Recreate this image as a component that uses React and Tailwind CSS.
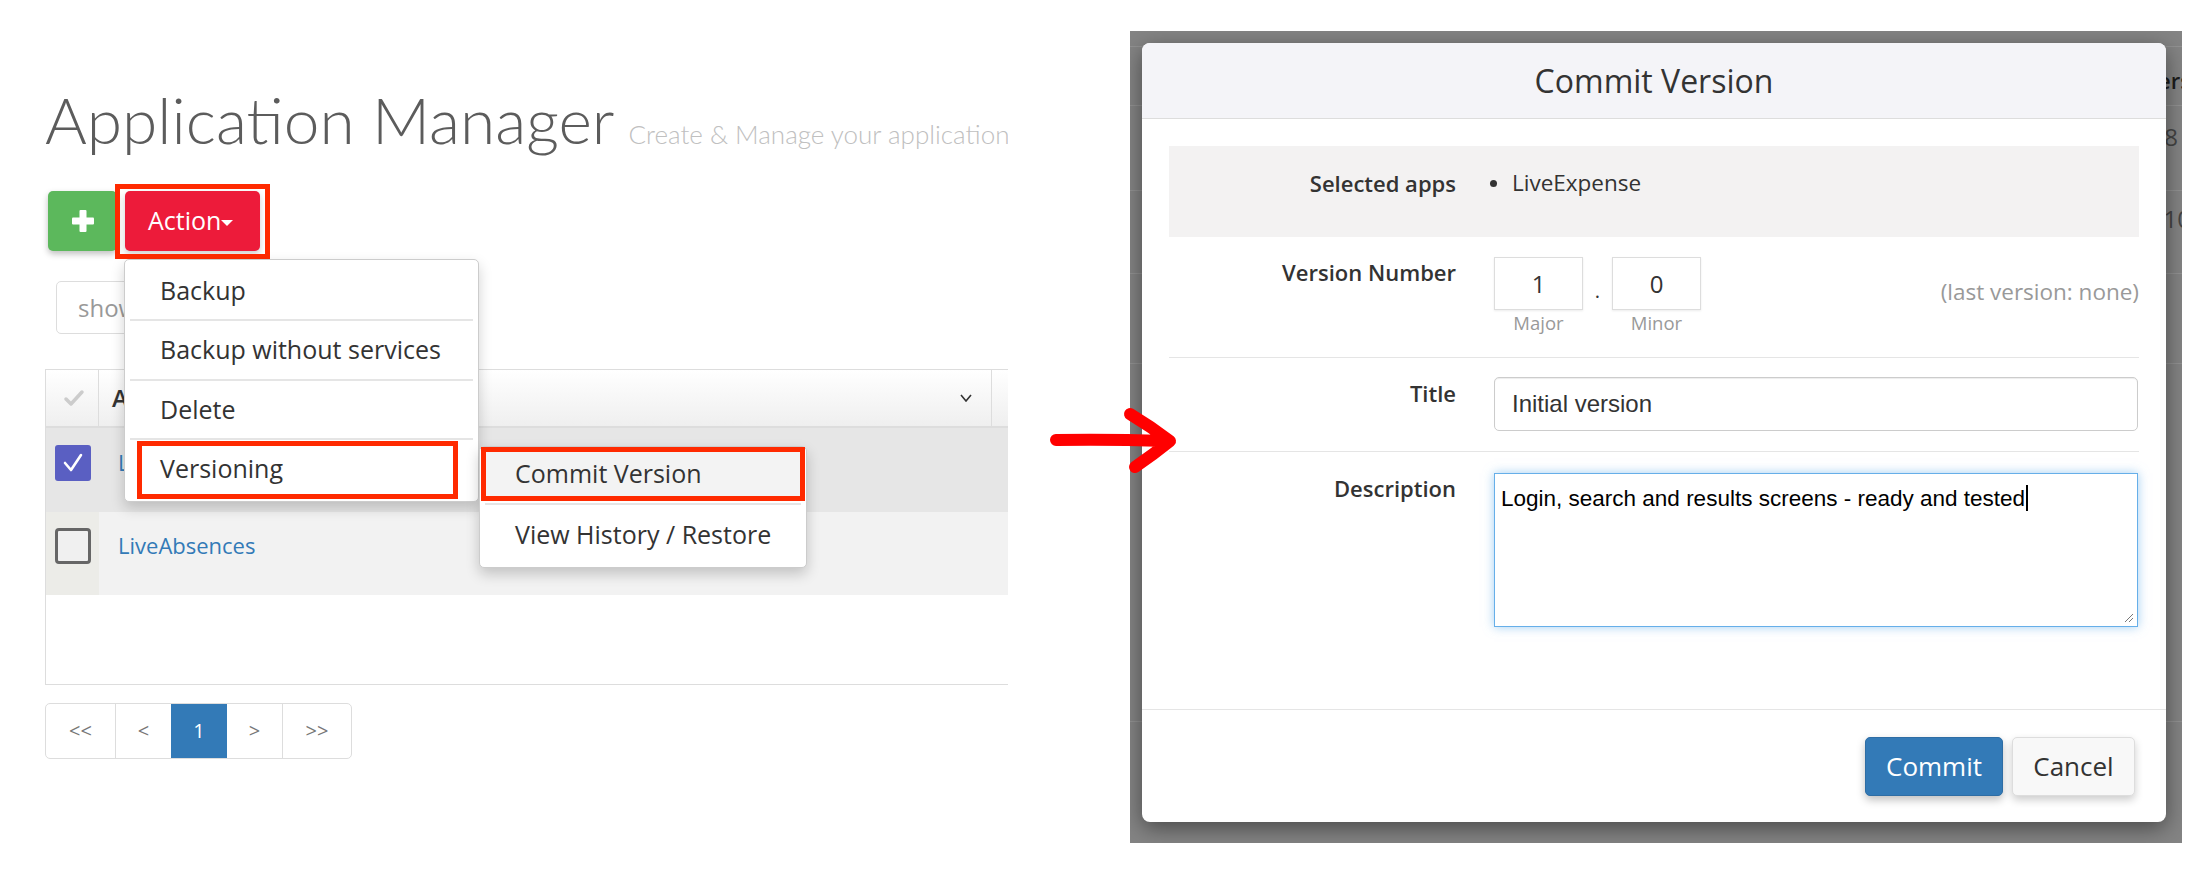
import React from 'react'

function RedBox({ className }) {
  return <span className={`pointer-events-none absolute border-[5px] border-[#ff2a00] ${className}`} />
}

function LeftPanel() {
  return (
    <div className="w-[1008px] shrink-0 overflow-hidden pl-[45px]">
      <div className="mt-[88px] flex items-baseline whitespace-nowrap font-['Lato',sans-serif] font-light">
        <h1 className="text-[64px] leading-none text-[#5c5c5c]">Application Manager</h1>
        <span className="ml-[14px] text-[26px] text-[#c0c0c0]">Create &amp; Manage your applications</span>
      </div>

      <div className="relative z-10 mt-[37px] flex h-[60px]">
        <button className="ml-[3px] flex w-[69px] items-center justify-center rounded-[5px] bg-[#5cb85c] shadow-[0_3px_6px_rgba(0,0,0,0.25)]">
          <svg width="24" height="24" viewBox="0 0 24 24">
            <rect x="8.5" y="1" width="7" height="22" rx="1" fill="#fff" />
            <rect x="1" y="8.5" width="22" height="7" rx="1" fill="#fff" />
          </svg>
        </button>
        <div className="relative ml-[8px]">
          <button className="flex h-full w-[135px] items-center rounded-[5px] bg-[#ed1b3a] pl-[23px] text-[25px] text-white shadow-[0_3px_6px_rgba(0,0,0,0.2)]">
            Action
            <span className="mt-[3px] inline-block h-0 w-0 border-x-[6px] border-t-[6px] border-x-transparent border-t-white" />
          </button>
          <RedBox className="-left-[10px] -top-[7px] -right-[10px] -bottom-[8px]" />
        </div>

        <div className="absolute left-[79px] top-[68px] w-[355px] rounded-[5px] border border-[#ccc] bg-white pb-[4px] pt-[2px] text-[25px] text-[#333] shadow-[0_6px_14px_rgba(0,0,0,0.18)]">
          <div className="flex h-[57px] items-center pl-[35px]">Backup</div>
          <div className="mx-[5px] h-[2px] bg-[#e5e5e5]" />
          <div className="flex h-[58px] items-center pl-[35px]">Backup without services</div>
          <div className="mx-[5px] h-[2px] bg-[#e5e5e5]" />
          <div className="flex h-[57px] items-center pl-[35px]">Delete</div>
          <div className="mx-[5px] h-[2px] bg-[#e5e5e5]" />
          <div className="relative flex h-[57px] items-center pl-[35px]">
            Versioning
            <RedBox className="left-[12px] right-[20px] top-[1px] -bottom-[2px]" />
          </div>
        </div>

        <div className="absolute left-[434px] top-[255px] w-[328px] rounded-[5px] border border-[#ccc] bg-white pb-[2px] text-[25px] text-[#333] shadow-[0_6px_14px_rgba(0,0,0,0.2)]">
          <div className="relative mx-[1px] flex h-[54px] items-center bg-[#f3f3f3] pl-[34px]">
            Commit Version
            <RedBox className="left-0 right-0 top-0 bottom-0" />
          </div>
          <div className="mx-[5px] mt-[2px] h-[2px] bg-[#e5e5e5]" />
          <div className="flex h-[60px] items-center pl-[35px]">View History / Restore</div>
        </div>
      </div>

      <div className="ml-[11px] mt-[30px] flex h-[53px] w-[300px] items-center rounded-[5px] border border-[#ddd] pl-[21px] text-[24px] text-[#999]">
        show
      </div>

      <div className="mt-[35px] w-[1100px] border-y border-l border-[#ddd]">
        <div className="flex h-[58px] border-b-2 border-[#ddd] bg-gradient-to-b from-white to-[#efefef]">
          <div className="flex w-[53px] items-center justify-center border-r border-[#ddd] pl-[4px]">
            <svg width="22" height="18" viewBox="0 0 22 18" fill="none" stroke="#ccc" strokeWidth="3.5" strokeLinecap="round" strokeLinejoin="round">
              <path d="M3 10l5 5L19 3" />
            </svg>
          </div>
          <div className="flex w-[893px] items-center justify-between border-r border-[#ddd] pl-[13px] pr-[19px] text-[24px] font-semibold text-[#333]">
            <span>App Name</span>
            <svg width="12" height="8" viewBox="0 0 12 8" fill="none" stroke="#333" strokeWidth="1.6">
              <path d="M1 1l5 6 5-6" />
            </svg>
          </div>
          <div className="flex-1" />
        </div>
        <div className="flex h-[84px] bg-[#e6e6e6]">
          <div className="flex w-[53px] justify-center pt-[17px]">
            <span className="flex h-[36px] w-[36px] items-center justify-center rounded-[3px] bg-[#5a5fc2]">
              <svg width="24" height="24" viewBox="0 0 24 24" fill="none" stroke="#fff" strokeWidth="2.6" strokeLinecap="round" strokeLinejoin="round">
                <path d="M4 12l6 7L20 4" />
              </svg>
            </span>
          </div>
          <div className="pl-[19px] pt-[19px] text-[22px] leading-[30px] text-[#337ab7]">LiveExpense</div>
        </div>
        <div className="flex h-[83px] bg-[#f2f2f2]">
          <div className="flex w-[53px] justify-center bg-[#ececE8] pt-[16px]">
            <span className="h-[36px] w-[36px] rounded-[4px] border-[3px] border-[#666] bg-[#f0f0f0]" />
          </div>
          <div className="pl-[19px] pt-[18px] text-[22px] leading-[30px] text-[#337ab7]">LiveAbsences</div>
        </div>
        <div className="h-[89px] bg-white" />
      </div>

      <div className="mt-[18px] flex h-[56px] w-[307px] overflow-hidden rounded-[5px] border border-[#ddd] text-[20px] text-[#777]">
        <div className="flex w-[70px] items-center justify-center border-r border-[#ddd]">&lt;&lt;</div>
        <div className="flex w-[55px] items-center justify-center">&lt;</div>
        <div className="flex w-[56px] items-center justify-center bg-[#337ab7] text-white">1</div>
        <div className="flex w-[56px] items-center justify-center border-r border-[#ddd]">&gt;</div>
        <div className="flex flex-1 items-center justify-center">&gt;&gt;</div>
      </div>
    </div>
  )
}

function FormLabel({ children, className = '' }) {
  return (
    <div className={`w-[287px] shrink-0 text-right text-[22px] font-semibold leading-[30px] text-[#333] ${className}`}>
      {children}
    </div>
  )
}

function VersionBox({ value, label }) {
  return (
    <div className="flex flex-col items-center">
      <div className="flex h-[53px] w-[89px] items-center justify-center border border-[#ddd] text-[24px] text-[#333] shadow-[0_1px_2px_rgba(0,0,0,0.08)]">
        {value}
      </div>
      <div className="mt-[1px] text-[18.5px] leading-[24px] text-[#999]">{label}</div>
    </div>
  )
}

function Modal() {
  return (
    <div className="absolute left-[12px] top-[12px] flex h-[779px] w-[1024px] flex-col overflow-hidden rounded-[8px] bg-white shadow-[0_6px_22px_rgba(0,0,0,0.45)]">
      <div className="flex h-[76px] shrink-0 items-center justify-center border-b border-[#ddd] bg-[#f4f4f8] text-[32px] text-[#333]">
        Commit Version
      </div>
      <div className="flex-1 px-[27px] pt-[27px]">
        <div className="flex h-[91px] bg-[#f3f2f2] pt-[22px]">
          <FormLabel>Selected apps</FormLabel>
          <div className="ml-[34px] flex h-[30px] items-center gap-[15px] text-[22.5px] text-[#333]">
            <span className="h-[7px] w-[7px] rounded-full bg-[#333]" />
            LiveExpense
          </div>
        </div>
        <div className="flex h-[121px] border-b border-[#e5e5e5] pt-[20px]">
          <FormLabel>Version Number</FormLabel>
          <div className="ml-[38px] flex items-start">
            <VersionBox value="1" label="Major" />
            <div className="flex h-[53px] w-[29px] items-end justify-center pb-[9px] text-[20px] leading-none text-[#333]">.</div>
            <VersionBox value="0" label="Minor" />
          </div>
          <div className="ml-auto mt-[21px] text-[22.5px] leading-[28px] text-[#999]">(last version: none)</div>
        </div>
        <div className="flex h-[94px] border-b border-[#e5e5e5] pt-[19px]">
          <FormLabel className="mt-[1px]">Title</FormLabel>
          <div className="ml-[38px] flex h-[54px] w-[644px] items-center rounded-[5px] border border-[#ccc] pl-[17px] font-['Liberation_Sans',Arial,sans-serif] text-[24px] text-[#333] shadow-[inset_0_1px_1px_rgba(0,0,0,0.075)]">
            Initial version
          </div>
        </div>
        <div className="flex pt-[21px]">
          <FormLabel>Description</FormLabel>
          <div className="relative ml-[38px] h-[154px] w-[644px] border border-[#66afe9] pl-[6px] pt-[6px] font-['Liberation_Sans',Arial,sans-serif] text-[22.5px] leading-[28px] text-black shadow-[0_0_10px_rgba(102,175,233,0.6)]">
            Login, search and results screens - ready and tested
            <span className="ml-[1px] inline-block h-[26px] w-[2px] translate-y-[5px] bg-black" />
            <svg className="absolute bottom-[3px] right-[3px]" width="10" height="10" viewBox="0 0 10 10" stroke="#777" strokeWidth="1">
              <path d="M1 9L9 1M5 9L9 5" />
            </svg>
          </div>
        </div>
      </div>
      <div className="flex h-[113px] shrink-0 items-start justify-end gap-[9px] border-t border-[#e5e5e5] pr-[31px] pt-[27px]">
        <button className="h-[59px] w-[138px] rounded-[5px] border border-[#2e6da4] bg-[#337ab7] text-[26px] text-white shadow-[0_4px_8px_rgba(0,0,0,0.25)]">
          Commit
        </button>
        <button className="h-[59px] w-[123px] rounded-[5px] border border-[#ddd] bg-[#f8f8f8] text-[26px] text-[#333] shadow-[0_4px_8px_rgba(0,0,0,0.2)]">
          Cancel
        </button>
      </div>
    </div>
  )
}

function Backdrop() {
  return (
    <div className="relative mt-[31px] h-[812px] w-[1052px] shrink-0 overflow-hidden bg-[#848484]">
      <div className="flex flex-col">
        <div className="h-[16px] border-b border-[#929292]" />
        <div className="flex h-[59px] items-start justify-end border-b border-[#929292] pt-[18px] text-[22px] font-semibold leading-[30px] text-[#1c1c1c]">
          <span className="mr-[-9px]">Vers</span>
        </div>
        <div className="flex h-[85px] items-start justify-end border-b border-[#929292] pr-[4px] pt-[15px] text-[24px] leading-[32px] text-[#444]">
          18
        </div>
        <div className="flex h-[83px] items-start justify-end border-b border-[#929292] pt-[12px] text-[24px] leading-[32px] text-[#444]">
          <span className="mr-[-9px]">10</span>
        </div>
        <div className="h-[90px] border-b border-[#929292]" />
        <div className="h-[358px] border-b border-[#929292]" />
      </div>
      <Modal />
    </div>
  )
}

export default function App() {
  return (
    <div className="relative flex h-[881px] w-[2201px] overflow-hidden bg-white font-['Open_Sans',sans-serif]">
      <LeftPanel />
      <div className="w-[122px] shrink-0" />
      <Backdrop />
      <svg className="absolute left-[1046px] top-[400px]" width="140" height="80" viewBox="0 0 140 80" fill="none" stroke="#ff0000" strokeWidth="12" strokeLinecap="round" strokeLinejoin="round">
        <path d="M10 40 Q60 39 121 41 M84 14 Q104 26 124 41 Q108 54 89 67" />
      </svg>
    </div>
  )
}
